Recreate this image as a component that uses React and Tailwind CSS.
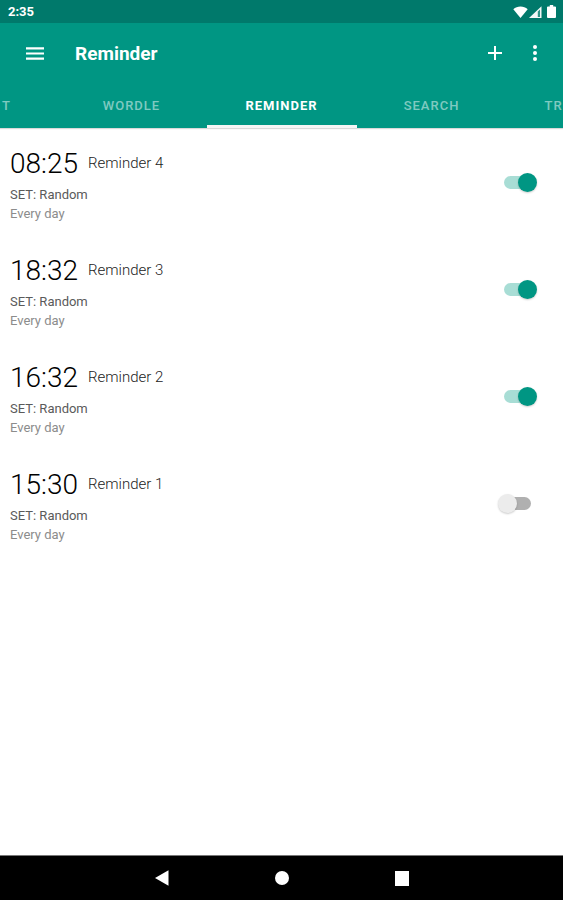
import { useState } from "react";

const initialReminders = [
  { id: 4, time: "08:25", name: "Reminder 4", on: true },
  { id: 3, time: "18:32", name: "Reminder 3", on: true },
  { id: 2, time: "16:32", name: "Reminder 2", on: true },
  { id: 1, time: "15:30", name: "Reminder 1", on: false },
];

function StatusBar() {
  return (
    <div className="flex h-[23px] items-center justify-between bg-[#00796b] pr-[7px] pl-2 text-white">
      <span className="text-[13px] leading-4 font-bold">2:35</span>
      <div className="flex items-center gap-[1px]">
        <svg className="h-3 w-[15px]" viewBox="0 0 15 12" fill="currentColor" aria-hidden="true">
          <path d="M7.500 12 .3 3.200C2.300 1.400 4.800.5 7.500.5s5.200.9 7.200 2.700z" />
        </svg>
        <svg className="h-3 w-[13px]" viewBox="0 0 13 12" aria-hidden="true">
          <path d="M0 12 12.500.3V12z" fill="white" fillOpacity="0.95" />
          <path d="M8.800 5.500 11 3.400V11H8.800z" fill="#00796b" fillOpacity="0.8" />
        </svg>
        <svg className="ml-[4px] h-[13px] w-[9px]" viewBox="0 0 9 14" preserveAspectRatio="none" fill="currentColor" aria-hidden="true">
          <path d="M2.800 0h3.400v1.500H8q1 0 1 1V13q0 1-1 1H1q-1 0-1-1V2.500q0-1 1-1h1.800z" />
        </svg>
      </div>
    </div>
  );
}

function Toolbar() {
  return (
    <header className="flex h-[60px] items-center pr-4 pl-[14px] text-white">
      <button type="button" aria-label="Open menu" className="flex h-10 w-[41px] items-center justify-center">
        <svg className="h-[13px] w-[18px]" viewBox="0 0 18 13" fill="currentColor" aria-hidden="true">
          <path d="M0 0.300h18v2.200H0zM0 5.400h18v2.200H0zM0 10.500h18v2.200H0z" />
        </svg>
      </button>
      <h1 className="ml-5 flex-1 pt-[2px] text-[19px] leading-6 font-bold">Reminder</h1>
      <button type="button" aria-label="Add reminder" className="flex h-10 w-10 items-center justify-center">
        <svg className="h-[14px] w-[14px]" viewBox="0 0 14 14" fill="currentColor" aria-hidden="true">
          <path d="M6 0h2v6h6v2H8v6H6V8H0V6h6z" />
        </svg>
      </button>
      <button type="button" aria-label="More options" className="-mr-2 flex h-10 w-10 items-center justify-center">
        <svg className="h-4 w-1" viewBox="0 0 4 16" fill="currentColor" aria-hidden="true">
          <circle cx="2" cy="2" r="2" />
          <circle cx="2" cy="8" r="2" />
          <circle cx="2" cy="14" r="2" />
        </svg>
      </button>
    </header>
  );
}

const tabBase = "h-full border-b-[3px] pt-[3px] whitespace-nowrap";
const idleTab = "border-transparent text-white/50";

function Tabs() {
  return (
    <nav className="flex h-[45px] text-[13px] leading-4 font-medium tracking-[1px]">
      <button type="button" className={`${tabBase} ${idleTab} min-w-0 flex-1 text-left`}>
        <span className="block pl-[2px]">T</span>
      </button>
      <button type="button" className={`${tabBase} ${idleTab} w-[150px]`}>WORDLE</button>
      <button type="button" className={`${tabBase} w-[150px] border-[#f5f5f5] font-bold text-white`}>REMINDER</button>
      <button type="button" className={`${tabBase} ${idleTab} w-[150px]`}>SEARCH</button>
      <button type="button" className={`${tabBase} ${idleTab} min-w-0 flex-1 overflow-hidden text-left`}>
        <span className="block pl-[38px]">TR</span>
      </button>
    </nav>
  );
}

function Toggle({ id, checked, onChange }) {
  return (
    <input
      id={id}
      type="checkbox"
      role="switch"
      checked={checked}
      onChange={onChange}
      className="relative h-5 w-[39px] shrink-0 appearance-none before:absolute before:top-[3px] before:left-[6px] before:h-[13px] before:w-[27px] before:rounded-full before:bg-[#b0b0b0] after:absolute after:top-0 after:left-0 after:h-[19px] after:w-[19px] after:rounded-full after:bg-[#ececec] after:shadow-[0_1px_2px_rgba(0,0,0,0.2)] checked:before:bg-[#a8ddd5] checked:after:left-[20px] checked:after:bg-[#009683]"
    />
  );
}

function ReminderRow({ reminder, onToggle }) {
  const inputId = `reminder-${reminder.id}`;
  return (
    <li className="flex h-[107px] items-center justify-between pr-[26px] pl-[10px]">
      <label htmlFor={inputId} className="block pt-[3px]">
        <span className="flex items-start">
          <span className="text-[28px] leading-9 font-light text-black">{reminder.time}</span>
          <span className="ml-[10px] pt-[7px] text-[15px] leading-5 font-light text-[#222222]">{reminder.name}</span>
        </span>
        <span className="mt-[3px] block text-[13px] leading-[19px] text-[#5a5a5a]">SET: Random</span>
        <span className="block text-[13px] leading-[19px] text-[#8c8c8c]">Every day</span>
      </label>
      <Toggle id={inputId} checked={reminder.on} onChange={() => onToggle(reminder.id)} />
    </li>
  );
}

function NavigationBar() {
  return (
    <footer className="flex h-[45px] items-center justify-center gap-[80px] border-t border-[#777777] bg-black text-white">
      <button type="button" aria-label="Back" className="flex h-10 w-10 items-center justify-center">
        <svg className="h-4 w-[14px]" viewBox="0 0 14 16" fill="currentColor" aria-hidden="true">
          <path d="M13.500.3v15.400L0 8z" />
        </svg>
      </button>
      <button type="button" aria-label="Home" className="flex h-10 w-10 items-center justify-center">
        <span className="h-[14px] w-[14px] rounded-full bg-white" />
      </button>
      <button type="button" aria-label="Recent apps" className="flex h-10 w-10 items-center justify-center">
        <span className="h-[15px] w-[14px] bg-white" />
      </button>
    </footer>
  );
}

export default function App() {
  const [reminders, setReminders] = useState(initialReminders);
  const toggle = (id) =>
    setReminders((list) => list.map((r) => (r.id === id ? { ...r, on: !r.on } : r)));

  return (
    <div className="flex min-h-screen flex-col bg-white font-['Roboto',sans-serif]">
      <StatusBar />
      <div className="bg-[#009683] shadow-[0_1px_1px_rgba(0,0,0,0.15)]">
        <Toolbar />
        <Tabs />
      </div>
      <main className="flex-1">
        <ul className="flex flex-col pt-px">
          {reminders.map((r) => (
            <ReminderRow key={r.id} reminder={r} onToggle={toggle} />
          ))}
        </ul>
      </main>
      <NavigationBar />
    </div>
  );
}
